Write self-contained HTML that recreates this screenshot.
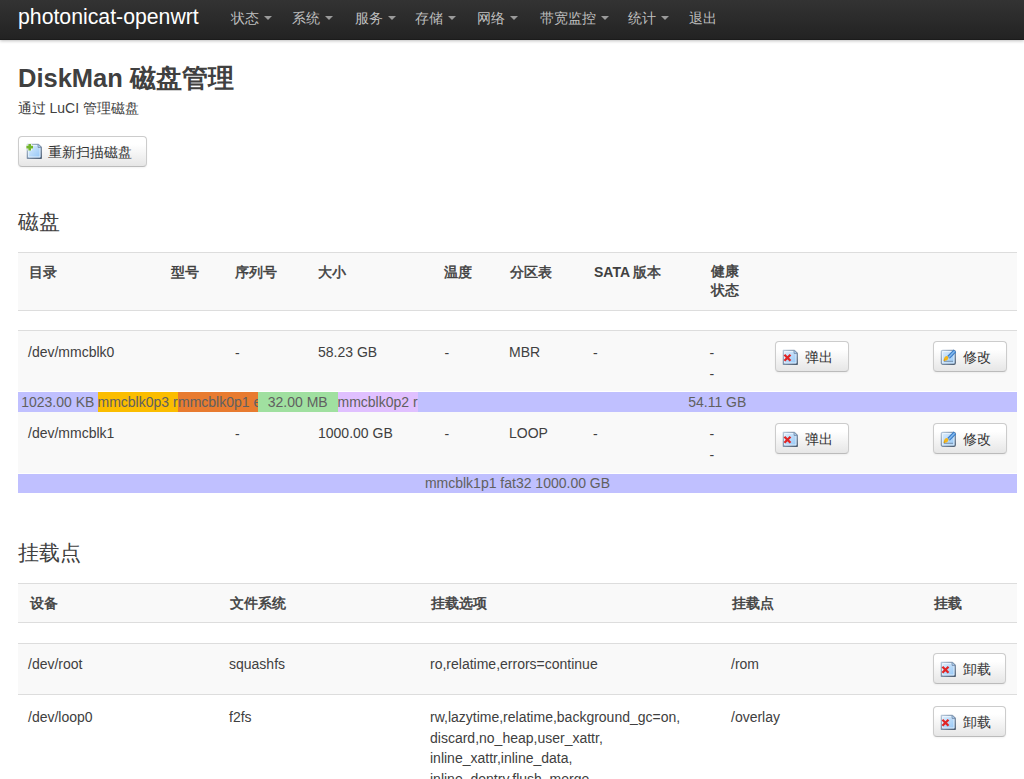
<!DOCTYPE html>
<html><head><meta charset="utf-8">
<style>
*{box-sizing:border-box;margin:0;padding:0}
html,body{width:1024px;height:779px;overflow:hidden;background:#fff}
body{font-family:"Liberation Sans",sans-serif;font-size:14px;line-height:20px;color:#404040;position:relative}
.a{position:absolute;white-space:nowrap}
#nav{position:absolute;left:0;top:0;width:1024px;height:40px;background:linear-gradient(#333,#222);box-shadow:0 1px 3px rgba(0,0,0,.25),inset 0 -1px 0 rgba(0,0,0,.2)}
.brand{color:#fff;font-size:21.25px;line-height:24px}
.ni{color:#bfbfbf;font-size:14px;line-height:20px}
.caret{display:inline-block;width:0;height:0;border-left:4px solid transparent;border-right:4px solid transparent;border-top:4px solid #9a9a9a;vertical-align:middle;margin-left:5px;margin-top:-2px}
h1{font-size:25.5px;line-height:30px;font-weight:bold;color:#404040}
h2{font-size:20.7px;line-height:24px;font-weight:normal;color:#404040}
.btn{position:absolute;height:31px;border:1px solid #ccc;border-bottom-color:#bbb;border-radius:4px;background:linear-gradient(#fff,#fff 25%,#e6e6e6);box-shadow:inset 0 1px 0 rgba(255,255,255,.2),0 1px 2px rgba(0,0,0,.05);color:#333}
.btn svg{position:absolute;width:16px;height:16px}
.btn span{position:absolute;white-space:nowrap;line-height:20px;margin-top:0.7px}
.hline{position:absolute;left:18px;width:999px;height:1px;background:#ddd}
.bg{position:absolute;left:18px;width:999px;background:#f9f9f9}
.th{font-weight:bold}
.cj{font-weight:normal;-webkit-text-stroke:0.5px #404040}
.bar{position:absolute;height:20px;overflow:hidden;text-align:center;color:#606060;line-height:20px;white-space:nowrap}
</style></head><body>
<svg width="0" height="0" style="position:absolute">
<defs>
<linearGradient id="gfill" x1="0" y1="0" x2="1" y2="1"><stop offset="0" stop-color="#e2f0fd"/><stop offset="1" stop-color="#8fc4f6"/></linearGradient>
<linearGradient id="gstroke" x1="0" y1="0" x2="1" y2="1"><stop offset="0" stop-color="#b7c8da"/><stop offset="0.5" stop-color="#8093aa"/><stop offset="1" stop-color="#4e5d70"/></linearGradient>
<symbol id="doc" viewBox="0 0 16 16">
<path d="M1.4 1.4H12.3L15.2 4.3V15.2H1.4Z" fill="url(#gfill)" stroke="url(#gstroke)" stroke-width="1.4" stroke-linejoin="round"/>
<path d="M2.6 2.6H11.8V4.8H14V14H2.6Z" fill="none" stroke="#f6fbff" stroke-width="0.9" opacity="0.75"/>
<path d="M12 1.6V4.6H15" fill="#a9cbec" stroke="#7590b0" stroke-width="0.9"/>
</symbol>
<symbol id="sq" viewBox="0 0 16 16">
<rect x="1.4" y="1.4" width="13.8" height="13.8" rx="1.3" fill="url(#gfill)" stroke="url(#gstroke)" stroke-width="1.4"/>
<rect x="2.6" y="2.6" width="11.4" height="11.4" fill="none" stroke="#f6fbff" stroke-width="0.9" opacity="0.75"/>
</symbol>
</defs></svg>
<div id="nav"></div>
<div class="a brand" style="left:18px;top:5px">photonicat-openwrt</div>
<div class="a ni" style="left:231.4px;top:8px">状态<i class="caret"></i></div>
<div class="a ni" style="left:292.2px;top:8px">系统<i class="caret"></i></div>
<div class="a ni" style="left:354.8px;top:8px">服务<i class="caret"></i></div>
<div class="a ni" style="left:415px;top:8px">存储<i class="caret"></i></div>
<div class="a ni" style="left:476.8px;top:8px">网络<i class="caret"></i></div>
<div class="a ni" style="left:539.6px;top:8px">带宽监控<i class="caret"></i></div>
<div class="a ni" style="left:628px;top:8px">统计<i class="caret"></i></div>
<div class="a ni" style="left:689px;top:8px">退出</div>

<h1 class="a" style="left:18px;top:63px">DiskMan 磁盘管理</h1>
<div class="a" style="left:17.6px;top:97.8px">通过 LuCI 管理磁盘</div>

<div class="btn" style="left:18px;top:136px;width:129px">
<svg style="left:7px;top:6px" viewBox="0 0 16 16"><use href="#doc"/><path d="M0.4 4.1H7M3.7 0.9V7.4" stroke="#fff" stroke-width="4.4" opacity="0.75"/><path d="M0.4 4.1H7M3.7 0.9V7.4" stroke="#72b52b" stroke-width="2.6"/></svg>
<span style="left:29px;top:4px">重新扫描磁盘</span></div>

<h2 class="a" style="left:18px;top:210px">磁盘</h2>

<!-- disk table -->
<div class="hline" style="top:252px"></div>
<div class="bg" style="top:253px;height:57px"></div>
<div class="hline" style="top:310px"></div>
<div class="hline" style="top:330px"></div>
<div class="bg" style="top:331px;height:60px"></div>
<div class="bg" style="top:412px;height:61px"></div>

<!-- disk header texts -->
<div class="a th" style="left:28.5px;top:262px"><span class="cj">目录</span></div>
<div class="a th" style="left:171px;top:262px"><span class="cj">型号</span></div>
<div class="a th" style="left:235px;top:262px"><span class="cj">序列号</span></div>
<div class="a th" style="left:318px;top:262px"><span class="cj">大小</span></div>
<div class="a th" style="left:444px;top:262px"><span class="cj">温度</span></div>
<div class="a th" style="left:510px;top:262px"><span class="cj">分区表</span></div>
<div class="a th" style="left:594px;top:262px">SATA <span class="cj">版本</span></div>
<div class="a th" style="left:711px;top:262px;line-height:19px"><span class="cj">健康</span><br><span class="cj">状态</span></div>

<!-- disk row 1 -->
<div class="a" style="left:28px;top:342px">/dev/mmcblk0</div>
<div class="a" style="left:235px;top:342.8px">-</div>
<div class="a" style="left:318px;top:342px">58.23 GB</div>
<div class="a" style="left:444.5px;top:342.8px">-</div>
<div class="a" style="left:509px;top:342px">MBR</div>
<div class="a" style="left:593px;top:342.8px">-</div>
<div class="a" style="left:709.5px;top:343px;line-height:21px">-<br>-</div>
<div class="btn" style="left:775px;top:341px;width:74px">
<svg class="ic-del" style="left:6px;top:7px" viewBox="0 0 16 16"><use href="#doc"/><path d="M2.4 5.7L8.5 11.8M8.5 5.7L2.4 11.8" stroke="#e02525" stroke-width="2.3"/></svg>
<span style="left:29px;top:4px">弹出</span></div>
<div class="btn" style="left:933px;top:341px;width:74px">
<svg class="ic-edit" style="left:6px;top:7px" viewBox="0 0 16 16"><use href="#sq"/><path d="M4 12.3H13" stroke="#6f8299" stroke-width="1" opacity="0.8"/><path d="M15 1.9L8.5 8.4" stroke="#3d7ec8" stroke-width="3.8"/><path d="M14.6 2.3L8.5 8.4" stroke="#86bcf0" stroke-width="1.4"/><ellipse cx="6.2" cy="9.3" rx="2.4" ry="1.9" transform="rotate(-45 6.2 9.3)" fill="#f2b51c"/><path d="M5 10.5L3.9 11.7" stroke="#e09a00" stroke-width="1.6"/></svg>
<span style="left:29px;top:4px">修改</span></div>
<div class="hline" style="top:391px;background:#fff"></div>

<!-- bar 1 -->
<div class="bar" style="left:18px;top:392px;width:79.5px;background:#c0c0ff">1023.00 KB</div>
<div class="bar" style="left:97.5px;top:392px;width:80.5px;background:#fbbd00;text-align:left">mmcblk0p3 rootfs</div>
<div class="bar" style="left:178px;top:392px;width:80px;background:#e87b30;text-align:left">mmcblk0p1 ext4</div>
<div class="bar" style="left:258px;top:392px;width:79.5px;background:#a0e0a0">32.00 MB</div>
<div class="bar" style="left:337.5px;top:392px;width:80px;background:#e0c0ff;text-align:left">mmcblk0p2 rootfs</div>
<div class="bar" style="left:417.5px;top:392px;width:599.5px;background:#c0c0ff">54.11 GB</div>

<!-- disk row 2 -->
<div class="a" style="left:28px;top:423px">/dev/mmcblk1</div>
<div class="a" style="left:235px;top:423.8px">-</div>
<div class="a" style="left:318px;top:423px">1000.00 GB</div>
<div class="a" style="left:444.5px;top:423.8px">-</div>
<div class="a" style="left:509px;top:423px">LOOP</div>
<div class="a" style="left:593px;top:423.8px">-</div>
<div class="a" style="left:709.5px;top:424px;line-height:21px">-<br>-</div>
<div class="btn" style="left:775px;top:423px;width:74px">
<svg class="ic-del" style="left:6px;top:7px" viewBox="0 0 16 16"><use href="#doc"/><path d="M2.4 5.7L8.5 11.8M8.5 5.7L2.4 11.8" stroke="#e02525" stroke-width="2.3"/></svg>
<span style="left:29px;top:4px">弹出</span></div>
<div class="btn" style="left:933px;top:423px;width:74px">
<svg class="ic-edit" style="left:6px;top:7px" viewBox="0 0 16 16"><use href="#sq"/><path d="M4 12.3H13" stroke="#6f8299" stroke-width="1" opacity="0.8"/><path d="M15 1.9L8.5 8.4" stroke="#3d7ec8" stroke-width="3.8"/><path d="M14.6 2.3L8.5 8.4" stroke="#86bcf0" stroke-width="1.4"/><ellipse cx="6.2" cy="9.3" rx="2.4" ry="1.9" transform="rotate(-45 6.2 9.3)" fill="#f2b51c"/><path d="M5 10.5L3.9 11.7" stroke="#e09a00" stroke-width="1.6"/></svg>
<span style="left:29px;top:4px">修改</span></div>

<!-- bar 2 -->
<div class="bar" style="left:18px;top:474px;height:19px;line-height:19px;width:999px;background:#c0c0ff">mmcblk1p1 fat32 1000.00 GB</div>

<h2 class="a" style="left:18px;top:541px">挂载点</h2>

<!-- mount table -->
<div class="hline" style="top:583px"></div>
<div class="bg" style="top:584px;height:38px"></div>
<div class="hline" style="top:622px"></div>
<div class="hline" style="top:643px"></div>
<div class="bg" style="top:644px;height:50px"></div>
<div class="hline" style="top:694px"></div>
<div class="a th" style="left:29.5px;top:593px"><span class="cj">设备</span></div>
<div class="a th" style="left:229.5px;top:593px"><span class="cj">文件系统</span></div>
<div class="a th" style="left:431px;top:593px"><span class="cj">挂载选项</span></div>
<div class="a th" style="left:732px;top:593px"><span class="cj">挂载点</span></div>
<div class="a th" style="left:934px;top:593px"><span class="cj">挂载</span></div>

<div class="a" style="left:28px;top:654px">/dev/root</div>
<div class="a" style="left:229px;top:654px">squashfs</div>
<div class="a" style="left:430px;top:654px">ro,relatime,errors=continue</div>
<div class="a" style="left:731px;top:654px">/rom</div>
<div class="btn" style="left:933px;top:653px;width:73px">
<svg class="ic-del" style="left:6px;top:7px" viewBox="0 0 16 16"><use href="#doc"/><path d="M2.4 5.7L8.5 11.8M8.5 5.7L2.4 11.8" stroke="#e02525" stroke-width="2.3"/></svg>
<span style="left:29px;top:4px">卸载</span></div>

<div class="a" style="left:28px;top:707px">/dev/loop0</div>
<div class="a" style="left:229px;top:707px">f2fs</div>
<div class="a" style="left:430px;top:707px;line-height:20.6px">rw,lazytime,relatime,background_gc=on,<br>discard,no_heap,user_xattr,<br>inline_xattr,inline_data,<br>inline_dentry,flush_merge,</div>
<div class="a" style="left:731px;top:707px">/overlay</div>
<div class="btn" style="left:933px;top:706px;width:73px">
<svg class="ic-del" style="left:6px;top:7px" viewBox="0 0 16 16"><use href="#doc"/><path d="M2.4 5.7L8.5 11.8M8.5 5.7L2.4 11.8" stroke="#e02525" stroke-width="2.3"/></svg>
<span style="left:29px;top:4px">卸载</span></div>

</body></html>
